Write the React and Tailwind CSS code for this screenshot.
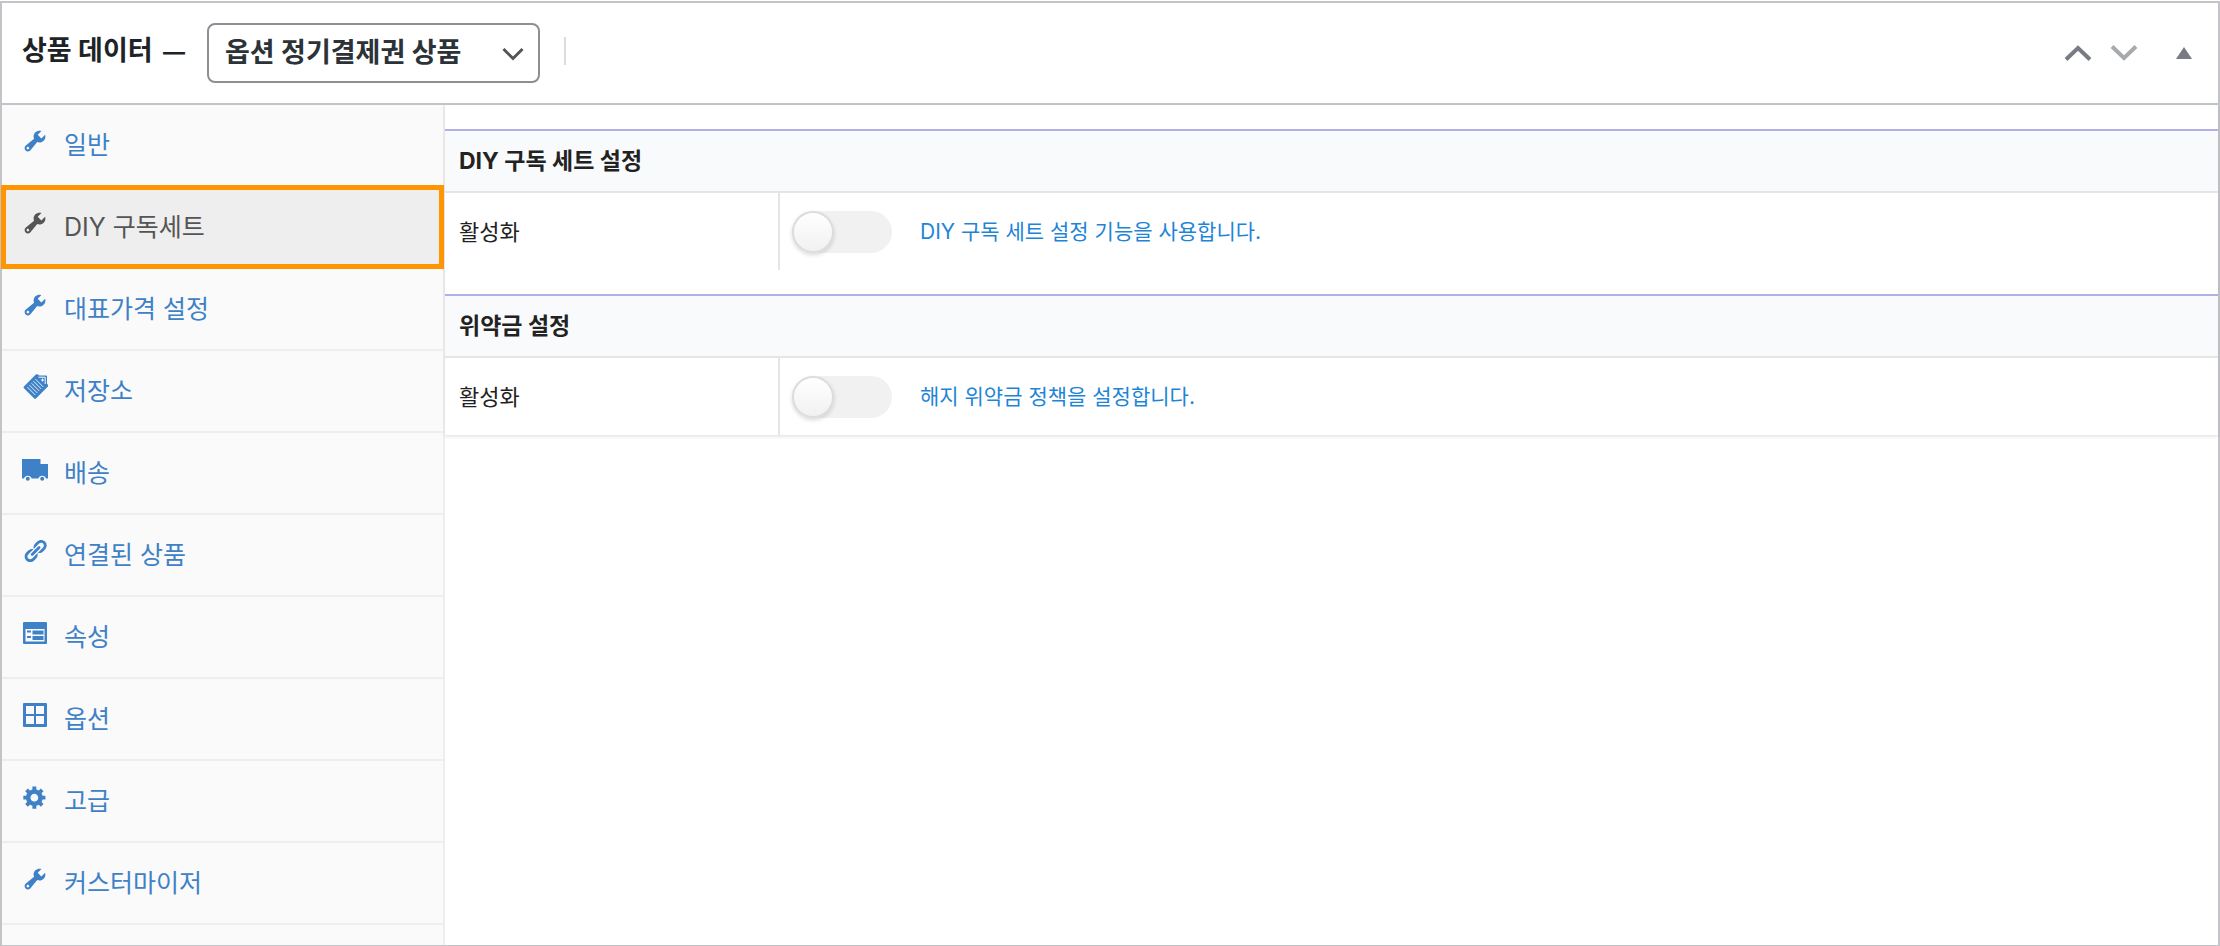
import React, { useState } from "react";

const WRENCH = "M16.68 9.77c-1.34 1.34-3.3 1.67-4.95.99l-5.41 6.52c-.99.99-2.59.99-3.58 0s-.99-2.59 0-3.57l6.52-5.42c-.68-1.65-.35-3.61.99-4.95 1.28-1.28 3.12-1.62 4.72-1.06l-2.89 2.89 2.82 2.82 2.86-2.87c.53 1.58.18 3.39-1.08 4.65zM3.81 16.21c.4.39 1.04.39 1.43 0 .4-.4.4-1.04 0-1.43-.39-.4-1.03-.4-1.43 0-.39.39-.39 1.03 0 1.43z";

const LINK = "M17.74 2.76c1.68 1.69 1.68 4.41 0 6.1l-1.53 1.52c-1.12 1.12-2.7 1.47-4.14 1.09l2.62-2.61.76-.77.76-.76c.84-.84.84-2.2 0-3.04-.84-.85-2.2-.85-3.04 0l-.77.76-3.38 3.38c-.37-1.44-.02-3.02 1.1-4.14l1.52-1.53c1.69-1.68 4.42-1.68 6.1 0zM8.59 13.43l5.34-5.34c.42-.42.42-1.1 0-1.52-.44-.43-1.13-.39-1.53 0l-5.33 5.34c-.42.42-.42 1.1 0 1.52.44.43 1.13.39 1.52 0zm-.76 2.29l4.14-4.15c.38 1.44.03 3.02-1.09 4.14l-1.52 1.53c-1.69 1.68-4.41 1.68-6.1 0-1.68-1.68-1.68-4.42 0-6.1l1.53-1.52c1.12-1.12 2.7-1.47 4.14-1.1l-4.14 4.15c-.85.84-.85 2.2 0 3.05.84.84 2.2.84 3.04 0z";

const GEAR = "M18 12h-2.18c-.17.7-.44 1.35-.81 1.93l1.54 1.54-2.1 2.1-1.54-1.54c-.58.36-1.23.63-1.91.79V19H8v-2.18c-.68-.16-1.33-.43-1.91-.79l-1.54 1.54-2.12-2.12 1.54-1.54c-.36-.58-.63-1.23-.79-1.91H1V9.03h2.17c.16-.7.44-1.35.8-1.94L2.43 5.55l2.1-2.1 1.54 1.54c.58-.37 1.24-.64 1.93-.81V2h3v2.18c.68.16 1.33.43 1.91.79l1.54-1.54 2.12 2.12-1.54 1.54c.36.59.64 1.24.8 1.94H18V12zm-8.5 1.5c1.66 0 3-1.34 3-3s-1.34-3-3-3-3 1.34-3 3 1.34 3 3 3z";

const ICONS = {
  wrench: <path d={WRENCH} />,
  link: <path d={LINK} />,
  gear: <path d={GEAR} />,
  // 26x26 drawings below
  storage: (
    <g>
      <path d="M2.200 12.300L13.800.6a1.500 1.500 0 0 1 1.500-.3L17.500 1.500h6.500a1 1 0 0 1 1 1v7l1 1.500a1.500 1.500 0 0 1-.3 1.800L14.200 24.300a1.500 1.500 0 0 1-2.200 0L2.200 14.500a1.500 1.500 0 0 1 0-2.200z" />
      <path d="M5.500 13.200l7.700 7.700M7.500 11.200l7.700 7.700M9.500 9.200l7.700 7.700M11.500 7.200l7.700 7.700M13.500 5.200l7.700 7.700" stroke="#fafafa" strokeWidth=".9" />
      <path d="M16.500 3.200H23.200V10" fill="none" stroke="#fafafa" strokeWidth="1" />
      <path d="M20.500 4.500v3M19 6h3" stroke="#fafafa" strokeWidth="1" />
    </g>
  ),
  truck: (
    <path d="M0 3h18.500v5H26v14.500h-2a4 4 0 0 0-7.600 0H9.600a4 4 0 0 0-7.600 0H0zM5.800 20.700a2 2 0 1 1 0 4 2 2 0 0 1 0-4zM20.200 20.700a2 2 0 1 1 0 4 2 2 0 0 1 0-4z" />
  ),
  list: (
    <path fillRule="evenodd" d="M2 2h22a1 1 0 0 1 1 1v20a1 1 0 0 1-1 1H2a1 1 0 0 1-1-1V3a1 1 0 0 1 1-1zM3.500 9v12.500h19V9zM5 10.500h4v2H5zM10.500 10.500h11v4h-11zM5 16h4v2H5zM10.500 16h11v4h-11z" />
  ),
  table: (
    <path fillRule="evenodd" d="M2 1h22a1 1 0 0 1 1 1v22a1 1 0 0 1-1 1H2a1 1 0 0 1-1-1V2a1 1 0 0 1 1-1zM4 4v8h8V4zM14 4v8h8V4zM4 14v8h8v-8zM14 14v8h8v-8z" />
  ),
};

const TABS = [
  { id: "general", label: "일반", icon: "wrench" },
  { id: "diy", label: "DIY 구독세트", icon: "wrench" },
  { id: "price", label: "대표가격 설정", icon: "wrench" },
  { id: "inventory", label: "저장소", icon: "storage" },
  { id: "shipping", label: "배송", icon: "truck" },
  { id: "linked", label: "연결된 상품", icon: "link" },
  { id: "attribute", label: "속성", icon: "list" },
  { id: "variations", label: "옵션", icon: "table" },
  { id: "advanced", label: "고급", icon: "gear" },
  { id: "customizer", label: "커스터마이저", icon: "wrench" },
];

const SECTIONS = [
  { id: "diy-set", title: "DIY 구독 세트 설정", desc: "DIY 구독 세트 설정 기능을 사용합니다." },
  { id: "penalty", title: "위약금 설정", desc: "해지 위약금 정책을 설정합니다." },
];

function TabIcon({ name }) {
  const isDashicon = ["wrench", "link", "gear"].includes(name);
  return (
    <svg className="size-[26px] shrink-0 -mt-2" viewBox={isDashicon ? "0 0 20 20" : "0 0 26 26"} fill="currentColor" aria-hidden="true">
      {ICONS[name]}
    </svg>
  );
}

function Section({ id, title, desc }) {
  const [enabled, setEnabled] = useState(false);

  return (
    <section className="mt-6">
      <h3 className="flex h-16 items-center border-t-2 border-b-2 border-t-[#b0b0e6] border-b-[#e5e5e5] bg-[#f9fafc] px-3.5 text-[23px] leading-8 font-bold text-[#222]">
        {title}
      </h3>
      <div className="flex h-[77px]">
        <label htmlFor={id} className="flex w-[335px] shrink-0 items-center border-r-2 border-[#e5e5e5] px-3.5 text-[22px] leading-8 text-[#222]">
          활성화
        </label>
        <div className="flex items-center gap-7 px-3">
          <span className="flex h-[42px] w-[100px] rounded-full bg-[#f1f1f1]">
            <input
              id={id}
              type="checkbox"
              role="switch"
              checked={enabled}
              onChange={(e) => setEnabled(e.target.checked)}
              className="size-[42px] cursor-pointer appearance-none rounded-full border-2 border-[#dcdcdc] bg-linear-to-b from-white to-[#f1f1f1] shadow-[0_2px_4px_rgba(0,0,0,0.15)] checked:ml-auto"
            />
          </span>
          <span className="text-[21px] leading-8 text-[#1e85d6]">{desc}</span>
        </div>
      </div>
    </section>
  );
}

export default function App() {
  const [activeTab, setActiveTab] = useState("diy");

  return (
    <div className="pt-px font-['Inter','Noto_Sans_CJK_KR',sans-serif]">
      <div className="border-2 border-b-1 border-[#c3c4c7] bg-white">
        {/* Header */}
        <header className="flex h-[102px] items-center justify-between border-b-2 border-[#c3c4c7] pr-[26px] pl-5">
          <div className="flex items-center">
            <label htmlFor="product-type" className="pb-1 text-[27px] leading-9 font-bold text-[#1d2327]">
              상품 데이터 <span className="ml-1 text-[22px]">—</span>
            </label>
            <div className="relative ml-[22px]">
              <select id="product-type" className="h-[60px] w-[333px] appearance-none rounded-lg border-2 border-[#8c8f94] bg-white px-4 text-[27px] font-bold text-[#2c3338]">
                <option>옵션 정기결제권 상품</option>
              </select>
              <svg className="pointer-events-none absolute top-6 right-4 h-4 w-[22px]" viewBox="0 0 22 16" fill="none" stroke="#555" strokeWidth="3" aria-hidden="true">
                <path d="M1.500 2L11 11.500L20.500 2" />
              </svg>
            </div>
            <span className="mb-1 ml-6 h-7 w-0.5 bg-[#dcdcde]" />
          </div>
          <div className="flex items-center text-[#787c82]">
            <button type="button" aria-label="위로 이동" className="mr-[18px] cursor-pointer">
              <svg className="h-4 w-7" viewBox="0 0 28 16" fill="none" stroke="currentColor" strokeWidth="4">
                <path d="M2 14.500L14 3L26 14.500" />
              </svg>
            </button>
            <button type="button" aria-label="아래로 이동" className="mr-[38px] text-[#a7aaad]">
              <svg className="h-4 w-7" viewBox="0 0 28 16" fill="none" stroke="currentColor" strokeWidth="4">
                <path d="M2 1.500L14 13L26 1.500" />
              </svg>
            </button>
            <button type="button" aria-label="패널 토글" className="cursor-pointer">
              <svg className="h-3 w-4" viewBox="0 0 16 12" fill="currentColor">
                <path d="M8 0L16 12H0z" />
              </svg>
            </button>
          </div>
        </header>

        <div className="flex">
          {/* Tabs */}
          <nav className="w-[443px] shrink-0 border-r-2 border-[#eee] bg-[#fafafa] pb-5">
            <ul>
              {TABS.map((tab) => (
                <li key={tab.id} className="relative">
                  <a
                    href={`#${tab.id}`}
                    onClick={() => setActiveTab(tab.id)}
                    className={`flex h-[82px] items-center gap-4 border-b-2 border-[#eee] px-5 text-[25px] leading-9 ${
                      activeTab === tab.id ? "bg-[#eee] text-[#555]" : "text-[#3f81c7]"
                    }`}
                  >
                    <TabIcon name={tab.icon} />
                    <span>{tab.label}</span>
                  </a>
                  {activeTab === tab.id && (
                    <span className="pointer-events-none absolute -top-0.5 -right-px bottom-0 -left-px border-5 border-[#ff9500]" />
                  )}
                </li>
              ))}
            </ul>
          </nav>

          {/* Panel */}
          <main className="min-w-0 flex-1">
            <div className="flow-root shadow-[0_2px_3px_rgba(0,0,0,0.1)]">
              {SECTIONS.map((section) => (
                <Section key={section.id} {...section} />
              ))}
            </div>
          </main>
        </div>
      </div>
    </div>
  );
}
